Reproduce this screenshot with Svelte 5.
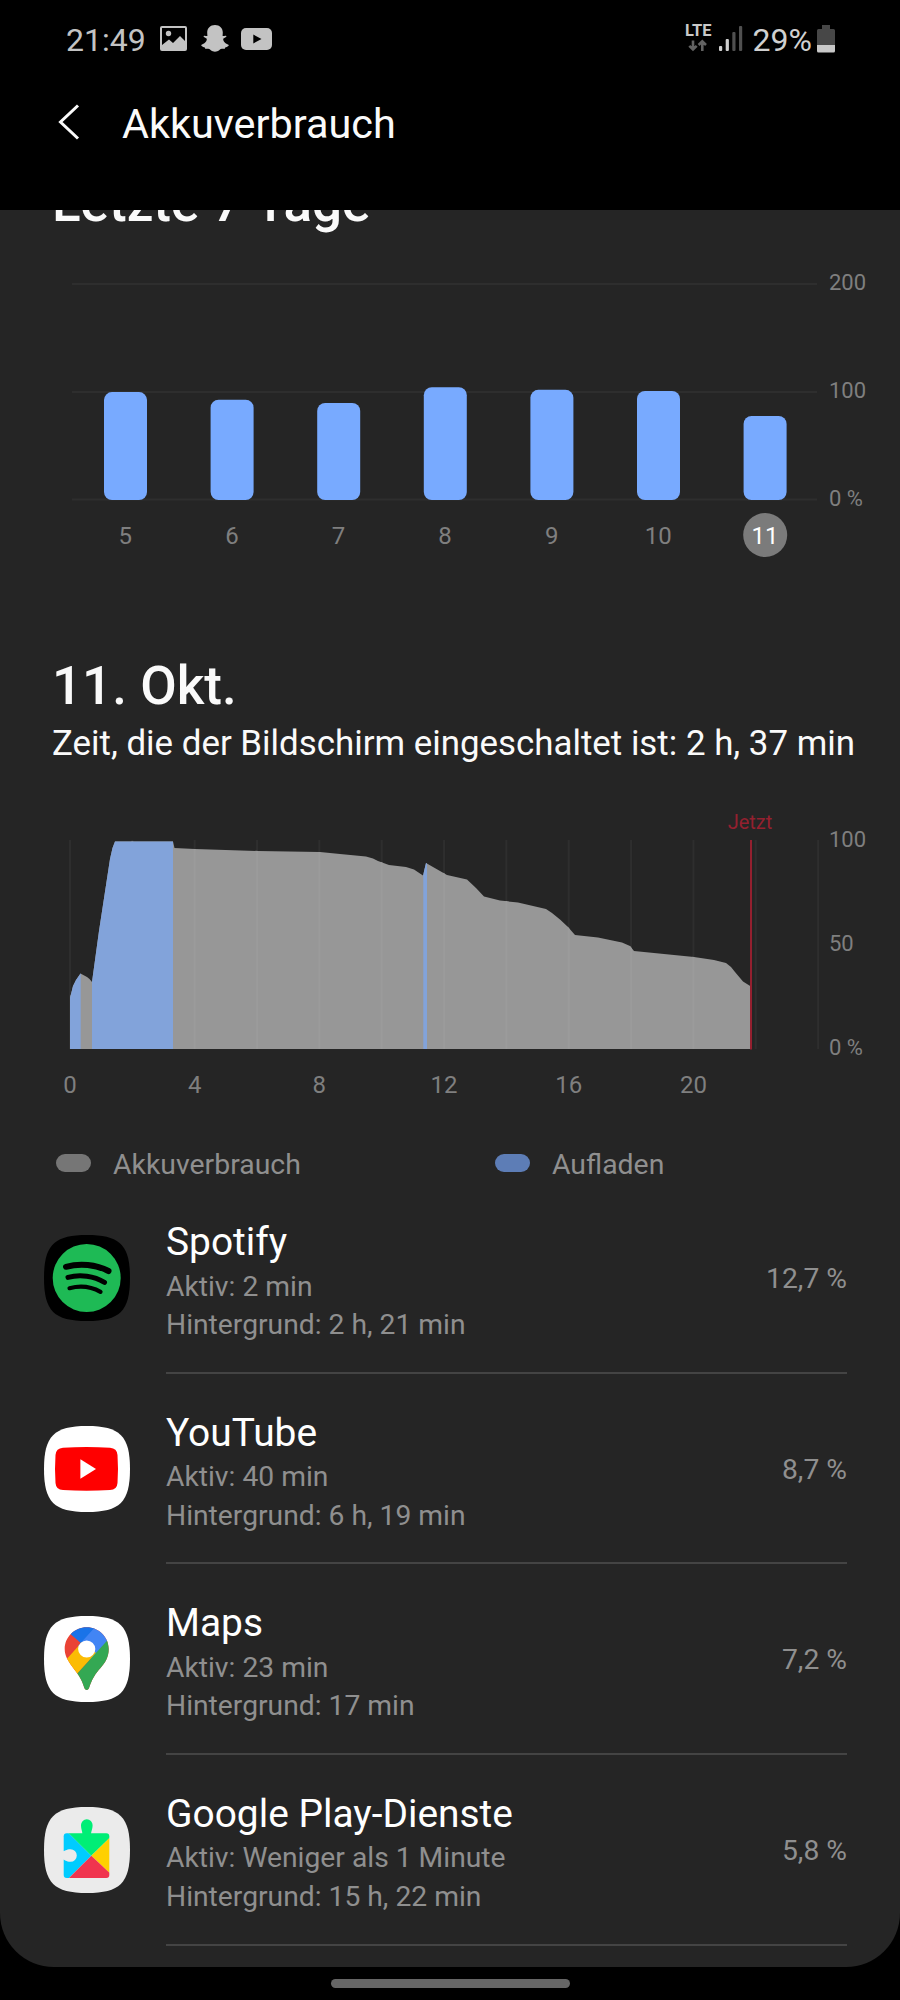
<script lang="ts">
  interface AppUsage {
    id: string
    name: string
    active: string
    background: string
    share: string
  }

  const days = [
    { label: '5', value: 99.5 },
    { label: '6', value: 92.5 },
    { label: '7', value: 89.5 },
    { label: '8', value: 104 },
    { label: '9', value: 101.5 },
    { label: '10', value: 100.5 },
    { label: '11', value: 77.5, selected: true },
  ]

  const weekTicks = [
    { label: '200', y: 49 },
    { label: '100', y: 157 },
    { label: '0 %', y: 264.5 },
  ]

  const dayTicks = [
    { label: '100', y: 81 },
    { label: '50', y: 185 },
    { label: '0 %', y: 289 },
  ]

  const hourLines = Array.from({ length: 13 }, (_, i) => i * 2)
  const hourLabels = [0, 4, 8, 12, 16, 20]

  // battery level over the day, in chart coordinates
  const level = [
    [70, 232], [73, 220], [76, 214], [80.5, 207.5], [87, 211], [89.5, 213], [92, 216], [99, 165],
    [110, 93], [112.5, 82], [115, 75.5], [173, 75.5], [174.5, 82], [195, 83], [258, 85], [320, 86],
    [340, 88], [366, 90.5], [373, 92.5], [378, 95], [389, 99], [406, 101], [414, 103.5], [423, 109.5],
    [426, 97], [447, 109], [467, 113.5], [476, 122], [484, 130.5], [500, 134.5], [518, 136.5],
    [546, 143], [552, 147], [560, 153.5], [568, 161], [575, 169], [598, 171.5], [622, 176.5],
    [630, 180], [634, 185], [694, 191], [714, 194], [726, 197], [731, 201], [735, 206], [743, 215.5],
    [751, 220.5],
  ]
  const area = `M70 283L${level.map((p) => p.join(' ')).join('L')}L751 283Z`

  const charging = [
    { from: 70, to: 80.7 },
    { from: 92, to: 173 },
    { from: 423.3, to: 427 },
  ]

  const apps: AppUsage[] = [
    { id: 'spotify', name: 'Spotify', active: '2 min', background: '2 h, 21 min', share: '12,7 %' },
    { id: 'youtube', name: 'YouTube', active: '40 min', background: '6 h, 19 min', share: '8,7 %' },
    { id: 'maps', name: 'Maps', active: '23 min', background: '17 min', share: '7,2 %' },
    { id: 'play', name: 'Google Play-Dienste', active: 'Weniger als 1 Minute', background: '15 h, 22 min', share: '5,8 %' },
  ]

  const tile = 'M43 0C76 0 86 10 86 43S76 86 43 86 0 76 0 43 10 0 43 0Z'

  const barX = (i: number) => 104 + i * 106.6
  const hourX = (h: number) => 70 + h * 31.17
</script>

<div class="screen">
  <header>
    <div class="status">
      <span class="clock">21:49</span>
      <svg class="picture" width="27" height="25" viewBox="0 0 27 25">
        <path fill="#c3c3c3" fill-rule="evenodd" d="M2 0H25Q27 0 27 2V23Q27 25 25 25H2Q0 25 0 23V2Q0 0 2 0ZM2 2V19L9 13.5L13 17L20 10L25 15V2Z" />
        <circle cx="8.5" cy="7.5" r="2.7" fill="#c3c3c3" />
      </svg>
      <svg class="snap" width="28" height="27" viewBox="0 0 28 27">
        <path fill="#c3c3c3" d="M14 0C18.800 0 21.800 3.200 21.800 7.500L21.600 11C22.700 11.200 24.300 10.200 25.300 10.900C26.300 11.800 23 13.100 22.200 13.800C22 16.800 24.700 19 27.400 19.800C28.300 20.300 27.600 21.800 24.200 22.400L23.500 24C21 23.700 19.800 23.900 18.500 25C15.700 27.300 12.300 27.300 9.500 25C8.200 23.900 7 23.700 4.500 24L3.800 22.400C.4 21.800-.3 20.300.6 19.800C3.300 19 6 16.800 5.800 13.800C5 13.100 1.700 11.800 2.700 10.900C3.700 10.200 5.300 11.200 6.400 11L6.200 7.500C6.200 3.200 9.200 0 14 0Z" />
      </svg>
      <svg class="video" width="31" height="22" viewBox="0 0 31 22">
        <rect width="31" height="22" rx="5" fill="#c3c3c3" />
        <path d="M12.300 6.500L20.500 11L12.300 15.500Z" fill="#000" />
      </svg>
      <svg class="lte" width="28" height="36" viewBox="0 -4 28 36">
        <text x="0" y="12" class="lte-text" textLength="26.500" lengthAdjust="spacingAndGlyphs">LTE</text>
        <path d="M8 16.500V25M4.300 21.800L8 25.500L11.700 21.800M17.300 27V18.500M13.600 21L17.300 17.300L21 21" fill="none" stroke="#626262" stroke-width="2.600" />
      </svg>
      <svg class="signal" width="24" height="26" viewBox="0 0 24 26">
        <rect x="0" y="20" width="3.200" height="5" rx="1" fill="#d0d0d0" />
        <rect x="6.700" y="13" width="3.200" height="12" rx="1" fill="#d0d0d0" />
        <rect x="13.300" y="6" width="3.200" height="19" rx="1" fill="#505050" />
        <rect x="20" y="0" width="3.200" height="25" rx="1" fill="#505050" />
      </svg>
      <span class="percent">29%</span>
      <svg class="battery" width="18" height="28" viewBox="0 0 18 28">
        <path d="M5 0H13V4H16.500Q18 4 18 5.500V20H0V5.500Q0 4 1.500 4H5Z" fill="#474747" />
        <path d="M0 20H18V26Q18 27.500 16.500 27.500H1.500Q0 27.500 0 26Z" fill="#c8c8c8" />
      </svg>
    </div>
    <div class="appbar">
      <svg class="back" width="22" height="36" viewBox="0 0 22 36">
        <path d="M20 1.500L2.500 18L20 34.500" fill="none" stroke="#fafafa" stroke-width="3" />
      </svg>
      <h1>Akkuverbrauch</h1>
    </div>
  </header>

  <main>
    <h2 class="week-title">Letzte 7 Tage</h2>
    <svg class="chart" width="900" height="345" viewBox="0 0 900 345">
      {#each weekTicks as tick}
        <rect x="72" y={tick.y - 1} width="745" height="2" fill="#2e2e2e" />
        <text class="axis" x="829" y={tick.y + 6}>{tick.label}</text>
      {/each}
      {#each days as day, i}
        <rect x={barX(i)} y={265 - day.value * 1.085} width="43" height={day.value * 1.085} rx="8" fill="#78aaff" />
        {#if day.selected}
          <circle cx={barX(i) + 21.600} cy="300" r="22" fill="#7b7b7b" />
        {/if}
        <text class="tick" class:selected={day.selected} x={barX(i) + 21.300} y="309">{day.label}</text>
      {/each}
    </svg>

    <h2 class="day-title">11. Okt.</h2>
    <p class="screen-time">Zeit, die der Bildschirm eingeschaltet ist: 2 h, 37 min</p>
    <svg class="chart" width="900" height="344" viewBox="0 0 900 344">
      <defs>
        <clipPath id="level-area"><path d={area} /></clipPath>
      </defs>
      {#each hourLines as hour}
        <rect x={hourX(hour) - 1} y="74" width="2" height="209" fill="#2e2e2e" />
      {/each}
      <path d={area} fill="#979797" />
      <g clip-path="url(#level-area)">
        {#each hourLines as hour}
          <rect x={hourX(hour) - 1} y="74" width="2" height="209" fill="#9b9b9b" />
        {/each}
        {#each charging as span}
          <rect x={span.from} y="74" width={span.to - span.from} height="209" fill="#82a3da" />
        {/each}
      </g>
      <rect x="750" y="74" width="2" height="209.500" fill="#94202f" />
      <text class="now" x="750" y="63">Jetzt</text>
      {#each dayTicks as tick}
        <text class="axis" x="829" y={tick.y}>{tick.label}</text>
      {/each}
      {#each hourLabels as hour}
        <text class="tick" x={hourX(hour)} y="327">{hour}</text>
      {/each}
    </svg>

    <div class="legend">
      <div class="legend-item"><span class="swatch usage"></span>Akkuverbrauch</div>
      <div class="legend-item"><span class="swatch charge"></span>Aufladen</div>
    </div>

    <ul>
      {#each apps as app (app.id)}
        <li>
          <svg class="icon" width="86" height="86" viewBox="0 0 86 86">
            {#if app.id === 'spotify'}
              <path d={tile} fill="#000" />
              <circle cx="42.700" cy="43" r="34" fill="#1eba55" />
              <g fill="none" stroke="#000" stroke-linecap="round">
                <path d="M22 31.800C36 28 52 29.500 64.500 36" stroke-width="6" />
                <path d="M24 42.400C36 39 50 41 60.500 47.400" stroke-width="5" />
                <path d="M25.500 53.200C36 50.500 47 51.500 56.500 56.900" stroke-width="4.200" />
              </g>
            {:else if app.id === 'youtube'}
              <path d={tile} fill="#fff" />
              <path d="M19 21.700Q42.500 20.300 66 21.700Q73 22.200 73.500 29Q74.500 43 73.500 57Q73 63.800 66 64.100Q42.500 65.400 19 64.100Q12 63.800 11.500 57Q10.500 43 11.500 29Q12 22.200 19 21.700Z" fill="#f00" />
              <path d="M36.400 33.300L52 43L36.400 52.700Z" fill="#fff" />
            {:else if app.id === 'maps'}
              <defs>
                <clipPath id="pin">
                  <path d="M42.700 11.200C55 11.200 64.700 21 64.700 33C64.700 41 61 47 56.500 52C51.500 57.500 48 63 45.200 71.500C44.400 74.800 41 74.800 40.200 71.500C37.500 62 33.500 58 28.500 51C24 44.500 20.700 40 20.700 33C20.700 21 30.400 11.200 42.700 11.200Z" />
                </clipPath>
              </defs>
              <path d={tile} fill="#fff" />
              <g clip-path="url(#pin)">
                <path d="M0 0H86V86H0Z" fill="#ea4335" />
                <path d="M16 9L38 28L56 6L30 2Z" fill="#1a73e8" />
                <path d="M52.500 9.500L34 30L48 43L72 15Z" fill="#4285f4" />
                <path d="M21 45L38 26L52 37L32.500 58.500L18 60Z" fill="#fbbc04" />
                <path d="M32.500 58.500L66 21.500L76 80H28Z" fill="#34a853" />
              </g>
              <circle cx="42.700" cy="33" r="8.600" fill="#fff" />
            {:else}
              <defs>
                <clipPath id="piece"><rect x="19.700" y="26.300" width="45.600" height="44.700" rx="3" /></clipPath>
              </defs>
              <path d={tile} fill="#ebebeb" />
              <path d="M38.500 28C38.500 24 37 22.500 37 18A5.800 5.800 0 0 1 48.600 18C48.600 22.500 47 24 47 28Z" fill="#00ee76" />
              <g clip-path="url(#piece)">
                <path d="M15 16.500L47.300 48.700L16 80Z" fill="#00ccff" />
                <path d="M24 25.500L47.300 48.700L72 24.500Z" fill="#00ee76" />
                <path d="M72 24.500V72L47.300 48.700Z" fill="#ffd000" />
                <path d="M23 73L47.300 48.700L72 72V76Z" fill="#f0344e" />
              </g>
              <path d="M18 44.300C21 44.300 22 42.200 26.500 42.200A6.300 6.300 0 0 1 26.500 54.800C22 54.800 21 52.500 18 52.500Z" fill="#ebebeb" />
            {/if}
          </svg>
          <div class="details">
            <div class="text">
              <h3>{app.name}</h3>
              <p>Aktiv: {app.active}</p>
              <p>Hintergrund: {app.background}</p>
            </div>
            <span class="share">{app.share}</span>
          </div>
        </li>
      {/each}
    </ul>
  </main>

  <div class="gesture"></div>
</div>

<style>
  :global(body) {
    background: #000;
  }

  .screen {
    width: 900px;
    height: 2000px;
    overflow: hidden;
    background: #000;
    color: #fafafa;
    font-family: Roboto, 'Liberation Sans', sans-serif;
  }

  h1,
  h2,
  h3,
  p,
  ul {
    margin: 0;
    padding: 0;
    font-weight: 400;
  }

  svg {
    display: block;
    flex: none;
  }

  header {
    height: 210px;
  }

  .status {
    display: flex;
    align-items: center;
    height: 80px;
    padding: 0 65px 0 66px;
    box-sizing: border-box;
    font-size: 32px;
    line-height: 40px;
    color: #c3c3c3;
  }

  .clock {
    width: 94px;
    margin-top: -1px;
  }

  .picture {
    margin-top: -3px;
  }

  .snap {
    margin: -3px 0 0 14px;
  }

  .video {
    margin: -3px auto 0 12px;
  }

  .lte {
    margin: -4px 6px 0 0;
  }

  .lte-text {
    font-size: 17px;
    font-weight: 700;
    fill: #c8c8c8;
  }

  .signal {
    margin: -2px 10px 0 0;
  }

  .percent {
    margin-top: -1px;
    color: #d0d0d0;
  }

  .battery {
    margin: -3px 0 0 5px;
  }

  .appbar {
    display: flex;
    align-items: center;
    height: 88px;
    padding-left: 58px;
  }

  .back {
    margin: -4px 42px 0 0;
  }

  h1 {
    font-size: 41.400px;
    line-height: 50px;
  }

  main {
    height: 1757px;
    overflow: hidden;
    background: #252525;
    border-radius: 0 0 54px 54px;
  }

  h2 {
    padding-left: 52px;
    font-size: 53px;
    font-weight: 500;
    line-height: 64px;
  }

  .week-title {
    margin-top: -39px;
  }

  .day-title {
    margin-top: 74px;
  }

  .screen-time {
    margin-top: 4px;
    padding-left: 52px;
    font-size: 34.880px;
    line-height: 44px;
    white-space: nowrap;
  }

  .axis {
    font-size: 22px;
    fill: #7f7f7f;
  }

  .tick {
    font-size: 24px;
    fill: #7f7f7f;
    text-anchor: middle;
  }

  .tick.selected {
    fill: #fff;
  }

  .now {
    font-size: 20px;
    fill: #94202f;
    text-anchor: middle;
  }

  .legend {
    display: flex;
    height: 39px;
    margin-top: 34px;
    padding-left: 56px;
    font-size: 28.400px;
    line-height: 40px;
    color: #8f8f8f;
  }

  .legend-item {
    display: flex;
    flex: none;
    align-items: center;
    width: 439px;
    height: 41px;
  }

  .legend-item:last-child {
    width: auto;
  }

  .swatch {
    width: 35px;
    height: 18px;
    margin: -3px 22px 0 0;
    border-radius: 9px;
  }

  .usage {
    background: #767676;
  }

  .charge {
    background: #5d7db6;
  }

  ul {
    list-style: none;
  }

  li {
    display: flex;
    height: 190.670px;
    padding: 0 53px 0 44px;
  }

  .icon {
    margin: 52px 36px 0 0;
  }

  .details {
    display: flex;
    flex: 1;
    justify-content: space-between;
    box-sizing: border-box;
    border-bottom: 2px solid #444;
    padding-top: 34px;
    white-space: nowrap;
  }

  h3 {
    font-size: 38.900px;
    line-height: 50px;
    color: #fff;
  }

  .text p,
  .share {
    font-size: 28.250px;
    line-height: 38px;
    color: #8f8f8f;
  }

  .text p {
    padding-top: 0.5px;
  }

  .share {
    margin-top: 43px;
  }

  .gesture {
    width: 239px;
    height: 9px;
    margin: 12px auto 0;
    border-radius: 5px;
    background: #666;
  }
</style>
